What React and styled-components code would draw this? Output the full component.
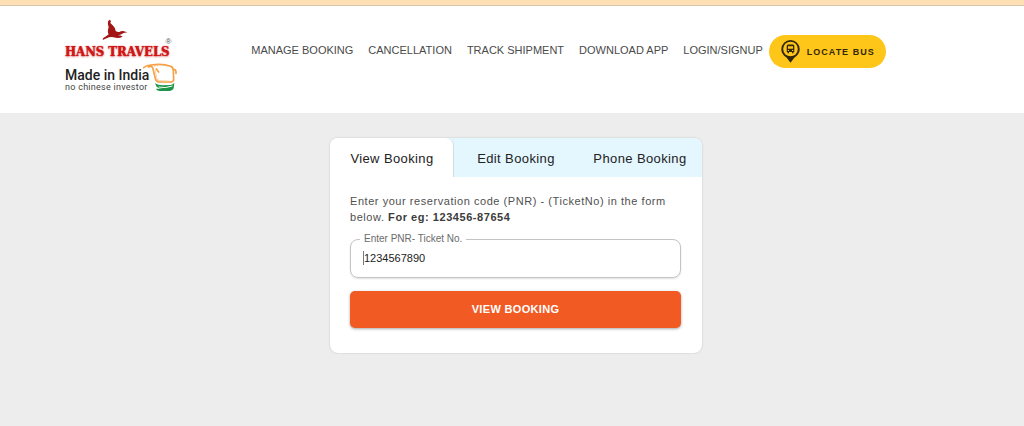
import React, { useState } from 'react';
import styled, { createGlobalStyle } from 'styled-components';

const GlobalStyle = createGlobalStyle`
  * {
    box-sizing: border-box;
  }

  body {
    margin: 0;
    background: #ededed;
    font-family: "Liberation Sans", Arial, sans-serif;
  }
`;

const TopStrip = styled.div`
  height: 6px;
  background: #ffdfb4;
  border-bottom: 1px solid #d9c4ae;
`;

const Header = styled.header`
  display: flex;
  align-items: flex-start;
  gap: 74px;
  padding: 13px 24px 20px 65px;
  background: #fff;

  @media (max-width: 900px) {
    flex-direction: column;
    gap: 16px;
    padding-left: 24px;
  }
`;

const LogoLink = styled.a`
  display: flex;
  flex-direction: column;
  flex-shrink: 0;
  color: #222;
  text-decoration: none;
`;

const BirdIcon = styled.svg`
  width: 26px;
  height: 22px;
  margin-left: 37px;
`;

const BrandName = styled.span`
  display: flex;
  align-items: flex-start;
  color: #cf1717;
  font-family: "DejaVu Serif Condensed", "DejaVu Serif", serif;
  font-size: 13px;
  font-weight: 700;
  line-height: 22px;
  text-shadow: 0 0 1px #cf1717, 0 1px 2px rgba(190, 30, 30, 0.5);
  white-space: nowrap;
`;

const Registered = styled.small`
  margin-left: -4px;
  color: #555;
  font-family: "Liberation Sans", sans-serif;
  font-size: 8px;
  font-weight: 400;
  line-height: 2px;
  text-shadow: none;
`;

const Tagline = styled.span`
  display: flex;
  align-items: flex-start;
  font-family: Roboto, sans-serif;
`;

const TaglineText = styled.span`
  display: flex;
  flex-direction: column;
  padding-top: 5px;
`;

const MadeIn = styled.strong`
  font-size: 14px;
  font-weight: 500;
  line-height: 14px;
`;

const Investor = styled.span`
  color: #444;
  font-size: 9px;
  line-height: 10px;
  letter-spacing: 0.03em;
`;

const BusIcon = styled.svg`
  width: 34px;
  height: 30px;
  margin-left: -6px;
`;

const Nav = styled.nav`
  display: flex;
  flex-wrap: wrap;
  align-items: center;
  gap: 15px;
  padding-top: 16px;
`;

const NavLink = styled.a`
  padding-bottom: 3px;
  color: #4a4a4a;
  font-size: 11px;
  line-height: 30px;
  text-decoration: none;
  white-space: nowrap;
`;

const LocateButton = styled.button`
  display: flex;
  align-items: center;
  gap: 7px;
  height: 33px;
  margin-left: -9px;
  padding: 0 11px 0 12px;
  border: none;
  border-radius: 17px;
  background: #ffc61a;
  color: #33270a;
  font-family: inherit;
  font-size: 9px;
  font-weight: 700;
  letter-spacing: 1px;
  white-space: nowrap;
  cursor: pointer;
`;

const Main = styled.main`
  display: flex;
  justify-content: center;
  padding: 25px 16px 40px 24px;
`;

const Card = styled.section`
  width: 100%;
  max-width: 372px;
  border-radius: 8px;
  background: #fff;
  box-shadow: 0 0 2px rgba(0, 0, 0, 0.2);
`;

const Tabs = styled.div`
  display: flex;
  border-radius: 8px 8px 0 0;
  background: #e4f6fe;
`;

const Tab = styled.button`
  flex: 1;
  height: 39px;
  padding: 1px 0 0 1px;
  border: none;
  border-right: 1px solid ${(props) => (props.$active ? '#d2dde2' : 'transparent')};
  border-radius: 8px 8px 0 0;
  background: ${(props) => (props.$active ? '#fff' : 'transparent')};
  color: #222;
  font-family: inherit;
  font-size: 13px;
  letter-spacing: 0.03em;
  white-space: nowrap;
  cursor: pointer;
`;

const Form = styled.form`
  padding: 16px 21px 25px 20px;
`;

const Hint = styled.p`
  margin: 0 0 8px;
  color: #505050;
  font-size: 11px;
  line-height: 16px;
  letter-spacing: 0.05em;

  strong {
    color: #3c3c3c;
  }
`;

const Field = styled.fieldset`
  height: 45px;
  margin: 0 0 13px;
  padding: 6px 9px 0;
  border: 1px solid #c4c4c4;
  border-radius: 8px;
  box-shadow: 0 1px 2px rgba(0, 0, 0, 0.12);
`;

const Legend = styled.legend`
  padding: 0 4px;
  background: #fff;
  color: #6b6b6b;
  font-size: 10px;
  line-height: 12px;
`;

const PnrInput = styled.input`
  display: block;
  width: calc(100% - 6px);
  height: 14px;
  margin-left: 3px;
  padding: 0;
  border: none;
  border-left: 1px solid #777;
  outline: none;
  background: transparent;
  color: #222;
  font-family: inherit;
  font-size: 11px;
`;

const SubmitButton = styled.button`
  display: block;
  width: 100%;
  height: 37px;
  padding: 0 0 1px;
  border: none;
  border-radius: 5px;
  background: #f25a23;
  box-shadow: 0 1px 3px rgba(0, 0, 0, 0.35);
  color: #fff;
  font-family: inherit;
  font-size: 11px;
  font-weight: 700;
  letter-spacing: 0.03em;
  cursor: pointer;
`;

const links = ['MANAGE BOOKING', 'CANCELLATION', 'TRACK SHIPMENT', 'DOWNLOAD APP', 'LOGIN/SIGNUP'];
const tabs = ['View Booking', 'Edit Booking', 'Phone Booking'];

const Logo = () => (
  <LogoLink href="/">
    <BirdIcon viewBox="155 57 78 66" aria-hidden="true">
      <path
        fill="#a31616"
        d="M179 59 Q184 63 180 69 L187 76 Q194 82 196 93 Q201 97 207 96 Q215 91 221 94 L231 97 L220 99 Q212 104 203 106 Q212 106 217 110 Q204 117 190 112 Q180 109 169 115 L157 120 L158 115 Q168 109 175 103 Q170 96 175 82 Q171 72 173 65 Q174 61 179 59 Z"
      />
    </BirdIcon>
    <BrandName>
      HANS TRAVELS
      <Registered>®</Registered>
    </BrandName>
    <Tagline>
      <TaglineText>
        <MadeIn>Made in India</MadeIn>
        <Investor>no chinese investor</Investor>
      </TaglineText>
      <BusIcon viewBox="280 188 102 90" fill="none" aria-hidden="true">
        <path
          stroke="#f6a046"
          strokeWidth="5"
          strokeLinecap="round"
          d="M282 202 Q292 193 306 194 Q338 189 363 198 Q370 200 371 210 L372 240 Q370 246 360 245 L328 245 Q319 244 317 234 L309 202 Q306 196 296 200 M320 206 L327 215 M371 207 Q380 206 379 219"
        />
        <path stroke="#f9bd80" strokeWidth="2" d="M313 199 Q318 194 330 194 M316 208 L321 232 Q322 240 331 241 L360 242" />
        <path fill="#1d9447" d="M316 249 Q324 255 340 255 L363 254 Q370 252 374 247 L372 263 Q370 271 358 272 L330 272 Q320 270 319 265 L339 266 Q326 264 321 259 Z" />
        <path stroke="#fff" strokeWidth="3" d="M327 260 Q346 265 368 257" />
      </BusIcon>
    </Tagline>
  </LogoLink>
);

const PinIcon = () => (
  <svg width="19" height="23" viewBox="0 0 19 23" aria-hidden="true">
    <path fill="#33270a" d="M9.500 0 A9.200 9.200 0 0 0 .3 9.200 C.3 13.500 3.500 16 5.500 17.500 L9.500 22.800 L13.500 17.500 C15.500 16 18.700 13.500 18.700 9.200 A9.200 9.200 0 0 0 9.500 0 Z" />
    <circle cx="9.5" cy="9" r="7.300" fill="#ffc61a" />
    <path
      fill="#33270a"
      fillRule="evenodd"
      d="M7 4.500 H12 Q13.300 4.500 13.300 6 V12 H12.500 V13.300 H11 V12 H8 V13.300 H6.500 V12 H5.700 V6 Q5.700 4.500 7 4.500 Z M7 6.200 V8.800 H12 V6.200 Z M6.800 10 V11 H8 V10 Z M11 10 V11 H12.200 V10 Z"
    />
  </svg>
);

const App = () => {
  const [activeTab, setActiveTab] = useState(tabs[0]);
  const [pnr, setPnr] = useState('1234567890');

  return (
    <>
      <GlobalStyle />
      <TopStrip />
      <Header>
        <Logo />
        <Nav>
          {links.map((link) => (
            <NavLink key={link} href="/">{link}</NavLink>
          ))}
          <LocateButton type="button">
            <PinIcon />
            LOCATE BUS
          </LocateButton>
        </Nav>
      </Header>
      <Main>
        <Card>
          <Tabs role="tablist">
            {tabs.map((tab) => (
              <Tab
                key={tab}
                type="button"
                role="tab"
                aria-selected={tab === activeTab}
                $active={tab === activeTab}
                onClick={() => setActiveTab(tab)}
              >
                {tab}
              </Tab>
            ))}
          </Tabs>
          <Form onSubmit={(e) => e.preventDefault()}>
            <Hint>
              Enter your reservation code (PNR) - (TicketNo) in the form below.{' '}
              <strong>For eg: 123456-87654</strong>
            </Hint>
            <Field>
              <Legend>
                <label htmlFor="pnr">Enter PNR- Ticket No.</label>
              </Legend>
              <PnrInput id="pnr" type="text" value={pnr} onChange={(e) => setPnr(e.target.value)} />
            </Field>
            <SubmitButton type="submit">VIEW BOOKING</SubmitButton>
          </Form>
        </Card>
      </Main>
    </>
  );
};

export default App;
